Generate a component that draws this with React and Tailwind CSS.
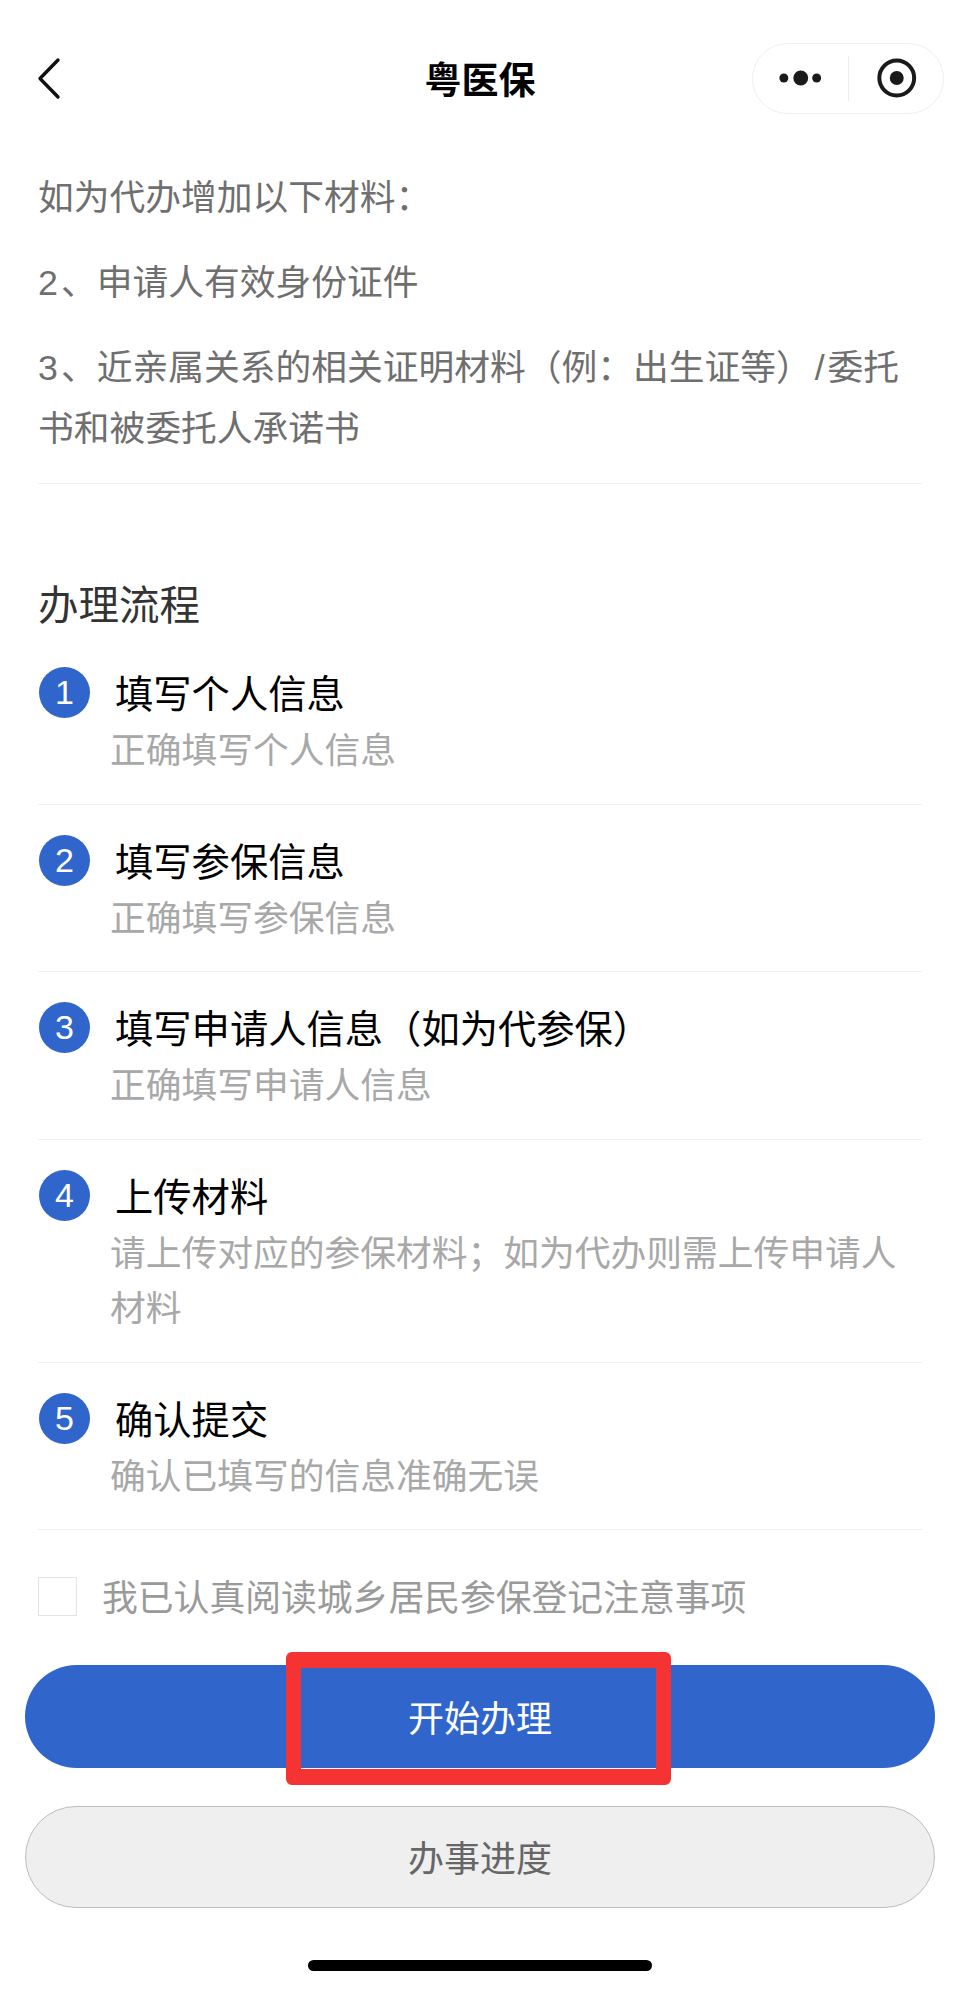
const steps = [
  { id: 1, title: '填写个人信息', desc: '正确填写个人信息' },
  { id: 2, title: '填写参保信息', desc: '正确填写参保信息' },
  { id: 3, title: '填写申请人信息（如为代参保）', desc: '正确填写申请人信息' },
  { id: 4, title: '上传材料', desc: '请上传对应的参保材料；如为代办则需上传申请人材料' },
  { id: 5, title: '确认提交', desc: '确认已填写的信息准确无误' },
];

function StepItem({ step }) {
  return (
    <div className="border-b border-[#f0f0f0] pt-[30px] pb-[24px]">
      <div className="flex items-center h-[51px]">
        <div className="ml-px w-[51px] h-[51px] rounded-full bg-[#3065cc] text-white flex items-center justify-center text-[34px] font-normal">
          {step.id}
        </div>
        <div className="ml-[25px] pt-[5px] text-[38.3px] leading-[46px] text-black">{step.title}</div>
      </div>
      <div className="mt-[6px] ml-[72px] text-[35.75px] leading-[55.5px] text-[#a8a8a8]">{step.desc}</div>
    </div>
  );
}

export default function App() {
  return (
    <div className="w-[960px] h-[1989px] bg-white overflow-hidden font-['Liberation_Sans','Noto_Sans_CJK_SC',sans-serif]">
      {/* Nav bar */}
      <div className="relative h-[156px] flex items-center justify-center">
        <svg className="absolute left-[36px] top-[57px]" width="26" height="43" viewBox="0 0 26 43" fill="none">
          <path d="M22 3 L4 21.5 L22 40" stroke="#111" strokeWidth="3.4" strokeLinecap="round" strokeLinejoin="round" />
        </svg>
        <div className="pt-[7px] text-[37px] font-bold text-black leading-none">粤医保</div>
        <div className="absolute left-[752px] top-[43px] w-[192px] h-[71px] rounded-full border border-[#f0f0f0] flex items-center">
          <svg className="w-[95px] h-[69px]" viewBox="0 0 95 69">
            <circle cx="31" cy="34" r="4.5" fill="#1a1a1a" />
            <circle cx="48" cy="34" r="7.5" fill="#1a1a1a" />
            <circle cx="64" cy="34" r="4.5" fill="#1a1a1a" />
          </svg>
          <div className="w-px h-[45px] bg-[#ececec]" />
          <svg className="w-[95px] h-[69px]" viewBox="0 0 95 69">
            <circle cx="48" cy="34" r="17.5" fill="none" stroke="#1a1a1a" strokeWidth="4" />
            <circle cx="48" cy="34" r="7" fill="#1a1a1a" />
          </svg>
        </div>
      </div>

      <div className="px-[38px]">
        {/* Materials */}
        <div className="pt-[12px] pb-[23px] border-b border-[#f0f0f0] text-[35.75px] leading-[61px] text-[#6f6f6f]">
          <p className="mb-6">如为代办增加以下材料：</p>
          <p className="mb-6">2<span className="ml-[3px]">、申请人有效身份证件</span></p>
          <p>
            3<span className="ml-[3px]">、近亲属关系的相关证明材料（例：出生证等）</span>
            <span className="mx-[3px]">/</span>
            <span>委托</span>
            <br />
            <span>书和被委托人承诺书</span>
          </p>
        </div>

        {/* Steps */}
        <h3 className="mt-[97px] mb-[6px] text-[40.5px] leading-[50px] text-[#333]">办理流程</h3>
        <div>
          {steps.map((step) => (
            <StepItem key={step.id} step={step} />
          ))}
        </div>

        {/* Agreement */}
        <div className="mt-[47px] flex items-center h-[39px]">
          <div className="w-[39px] h-[39px] border border-[#e4e4e4] bg-white" />
          <span className="ml-[25px] pt-[7px] text-[35.8px] leading-none text-[#9a9a9a]">我已认真阅读城乡居民参保登记注意事项</span>
        </div>
      </div>

      {/* Buttons */}
      <div className="mt-[49px] px-[25px]">
        <div className="relative h-[103px] pt-[6px] rounded-full bg-[#3065cc] flex items-center justify-center text-[36px] text-white">
          开始办理
          <div className="absolute left-[261px] top-[-13px] w-[385px] h-[133px] rounded-[6px] border-x-[15px] border-y-[16px] border-[#f63333]" />
          <div className="absolute left-[276px] top-[103px] w-[355px] h-px bg-white" />
        </div>
        <div className="mt-[38px] h-[102px] pt-[6px] rounded-full bg-[#efefef] border border-[#bdbdbd] flex items-center justify-center text-[36px] text-[#666]">
          办事进度
        </div>
      </div>

      {/* Home indicator */}
      <div className="mt-[52px] mx-auto w-[344px] h-[11px] rounded-full bg-black" />
    </div>
  );
}
